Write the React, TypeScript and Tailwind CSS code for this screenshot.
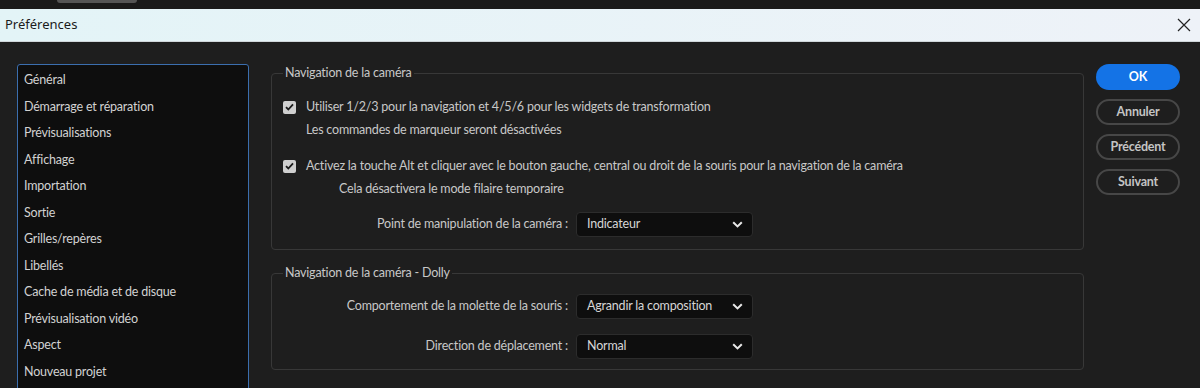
import React from "react";

const items = [
  "Général",
  "Démarrage et réparation",
  "Prévisualisations",
  "Affichage",
  "Importation",
  "Sortie",
  "Grilles/repères",
  "Libellés",
  "Cache de média et de disque",
  "Prévisualisation vidéo",
  "Aspect",
  "Nouveau projet",
];

function Check() {
  return (
    <span className="w-[13px] h-[13px] rounded-[2px] bg-[#cfcfcf] flex items-center justify-center shrink-0">
      <svg width="9" height="8" viewBox="0 0 9 8">
        <path d="M1 4.2l2.3 2.3L8 1.3" fill="none" stroke="#1a1a1a" strokeWidth="1.8" />
      </svg>
    </span>
  );
}

function Select({ value }: { value: string }) {
  return (
    <div className="w-[177px] h-[25px] bg-[#0e0e0e] border border-[#2c2c2c] rounded-[4px] flex items-center justify-between pl-[10px] pr-[9px] text-[#d6d6d6]">
      <span>{value}</span>
      <svg width="11" height="7" viewBox="0 0 11 7">
        <path d="M1.2 1.2l4.3 4.2 4.3-4.2" fill="none" stroke="#e8e8e8" strokeWidth="2" />
      </svg>
    </div>
  );
}

function Row({ label, value }: { label: string; value: string }) {
  return (
    <div className="flex items-center">
      <div className="w-[304px] text-right pr-[8px]">{label}</div>
      <Select value={value} />
    </div>
  );
}

function Btn({ children, primary }: { children: React.ReactNode; primary?: boolean }) {
  return (
    <div
      className={
        primary
          ? "h-[26px] rounded-full bg-[#1473e6] text-white font-bold flex items-center justify-center"
          : "h-[26px] rounded-full border-2 border-[#474747] text-[#c4c4c4] font-bold flex items-center justify-center"
      }
    >
      {children}
    </div>
  );
}

export default function App() {
  return (
    <div className="w-[1200px] h-[388px] overflow-hidden bg-[#1e1e1e] flex flex-col" style={{ fontFamily: "Lato, 'Open Sans', sans-serif" }}>
      <div className="h-[9px] bg-[#1a1a1a] relative shrink-0">
        <div className="absolute left-[57px] top-0 w-[80px] h-[3px] rounded-b-[3px] bg-[#555555]" />
      </div>
      <div className="h-[33px] shrink-0 bg-gradient-to-r from-[#e3f4f7] to-[#eef2f8] flex items-center justify-between pl-[5px] pr-[9px] border-b border-[#cfd6da]">
        <span className="text-[13px] text-[#1b1b1b]" style={{ fontFamily: "'Noto Sans', sans-serif" }}>Préférences</span>
        <svg width="14" height="14" viewBox="0 0 14 14">
          <path d="M1 1l12 12M13 1L1 13" stroke="#222" strokeWidth="1.2" />
        </svg>
      </div>
      <div className="flex flex-1 text-[12.5px] tracking-[-0.2px] text-[#c8c8c8]">
        <div className="ml-[17px] mt-[22px] w-[232px] h-[340px] bg-[#0e0e0e] border border-[#3b6eae] rounded-[3px] pt-[2px] pl-[6px] text-[#d2d2d2]">
          {items.map((t) => (
            <div key={t} className="leading-[26.5px] h-[26.5px]">{t}</div>
          ))}
        </div>
        <div className="ml-[22px] w-[813px] mt-[22px] flex flex-col gap-[14px]">
          <fieldset className="border border-[#383838] rounded-[4px] px-[11px] pt-[14px] pb-[12px]">
            <legend className="ml-0 px-[2px] leading-[18px]">Navigation de la caméra</legend>
            <div className="flex items-center gap-[10px] leading-[22px]">
              <Check />
              <span>Utiliser 1/2/3 pour la navigation et 4/5/6 pour les widgets de transformation</span>
            </div>
            <div className="pl-[23px] leading-[23px]">Les commandes de marqueur seront désactivées</div>
            <div className="flex items-center gap-[10px] leading-[22px] mt-[14px]">
              <Check />
              <span>Activez la touche Alt et cliquer avec le bouton gauche, central ou droit de la souris pour la navigation de la caméra</span>
            </div>
            <div className="pl-[56px] leading-[23px]">Cela désactivera le mode filaire temporaire</div>
            <div className="mt-[12px] -ml-[11px]">
              <Row label="Point de manipulation de la caméra :" value="Indicateur" />
            </div>
          </fieldset>
          <fieldset className="border border-[#383838] rounded-[4px] pt-[12px] pb-[10px] flex flex-col gap-[15px]">
            <legend className="ml-[11px] px-[2px] leading-[18px]">Navigation de la caméra - Dolly</legend>
            <Row label="Comportement de la molette de la souris :" value="Agrandir la composition" />
            <Row label="Direction de déplacement :" value="Normal" />
          </fieldset>
        </div>
        <div className="ml-[12px] mt-[22px] w-[84px] flex flex-col gap-[9px]">
          <Btn primary>OK</Btn>
          <Btn>Annuler</Btn>
          <Btn>Précédent</Btn>
          <Btn>Suivant</Btn>
        </div>
      </div>
    </div>
  );
}
